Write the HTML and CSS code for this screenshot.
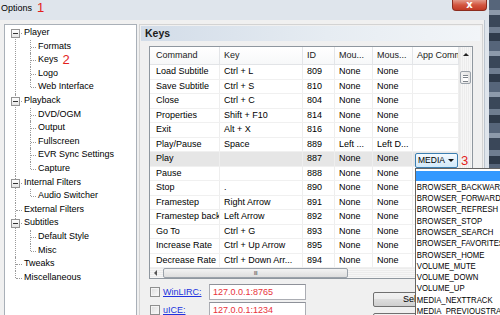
FILE: index.html
```html
<!DOCTYPE html>
<html lang="en">
<head>
<meta charset="UTF-8">
<title>Options</title>
<link rel="stylesheet" href="styles.css">
</head>
<body>
<div class="window">
  <div class="titlebar">
    <span class="title">Options</span>
    <span class="mark">1</span>
    <div class="close">x</div>
  </div>
  <div class="client">
    <ul class="tree">
      <li><div class="node"><span class="tog"></span>Player</div>
        <ul>
          <li><div class="node">Formats</div></li>
          <li><div class="node">Keys <span class="mark">2</span></div></li>
          <li><div class="node">Logo</div></li>
          <li><div class="node">Web Interface</div></li>
        </ul>
      </li>
      <li><div class="node"><span class="tog"></span>Playback</div>
        <ul>
          <li><div class="node">DVD/OGM</div></li>
          <li><div class="node">Output</div></li>
          <li><div class="node">Fullscreen</div></li>
          <li><div class="node">EVR Sync Settings</div></li>
          <li><div class="node">Capture</div></li>
        </ul>
      </li>
      <li><div class="node"><span class="tog"></span>Internal Filters</div>
        <ul>
          <li><div class="node">Audio Switcher</div></li>
        </ul>
      </li>
      <li><div class="node">External Filters</div></li>
      <li><div class="node"><span class="tog"></span>Subtitles</div>
        <ul>
          <li><div class="node">Default Style</div></li>
          <li><div class="node">Misc</div></li>
        </ul>
      </li>
      <li><div class="node">Tweaks</div></li>
      <li><div class="node">Miscellaneous</div></li>
    </ul>

    <div class="page">
      <div class="page-head">Keys</div>
      <div class="list">
        <div class="rows">
          <div class="row head">
            <div class="cell">Command</div><div class="cell">Key</div><div class="cell">ID</div><div class="cell">Mou...</div><div class="cell">Mous...</div><div class="cell">App Command</div>
          </div>
          <div class="row"><div class="cell">Load Subtitle</div><div class="cell">Ctrl + L</div><div class="cell">809</div><div class="cell">None</div><div class="cell">None</div><div class="cell"></div></div>
          <div class="row"><div class="cell">Save Subtitle</div><div class="cell">Ctrl + S</div><div class="cell">810</div><div class="cell">None</div><div class="cell">None</div><div class="cell"></div></div>
          <div class="row"><div class="cell">Close</div><div class="cell">Ctrl + C</div><div class="cell">804</div><div class="cell">None</div><div class="cell">None</div><div class="cell"></div></div>
          <div class="row"><div class="cell">Properties</div><div class="cell">Shift + F10</div><div class="cell">814</div><div class="cell">None</div><div class="cell">None</div><div class="cell"></div></div>
          <div class="row"><div class="cell">Exit</div><div class="cell">Alt + X</div><div class="cell">816</div><div class="cell">None</div><div class="cell">None</div><div class="cell"></div></div>
          <div class="row"><div class="cell">Play/Pause</div><div class="cell">Space</div><div class="cell">889</div><div class="cell">Left ...</div><div class="cell">Left D...</div><div class="cell"></div></div>
          <div class="row selected"><div class="cell">Play</div><div class="cell"></div><div class="cell">887</div><div class="cell">None</div><div class="cell">None</div>
            <div class="cell app">
              <div class="combo">MEDIA<span class="caret"></span>
                <span class="mark">3</span>
                <ul class="dropdown">
                  <li class="hl">&nbsp;</li>
                  <li>BROWSER_BACKWARD</li>
                  <li>BROWSER_FORWARD</li>
                  <li>BROWSER_REFRESH</li>
                  <li>BROWSER_STOP</li>
                  <li>BROWSER_SEARCH</li>
                  <li>BROWSER_FAVORITES</li>
                  <li>BROWSER_HOME</li>
                  <li>VOLUME_MUTE</li>
                  <li>VOLUME_DOWN</li>
                  <li>VOLUME_UP</li>
                  <li>MEDIA_NEXTTRACK</li>
                  <li>MEDIA_PREVIOUSTRACK</li>
                </ul>
              </div>
            </div>
          </div>
          <div class="row"><div class="cell">Pause</div><div class="cell"></div><div class="cell">888</div><div class="cell">None</div><div class="cell">None</div><div class="cell"></div></div>
          <div class="row"><div class="cell">Stop</div><div class="cell">.</div><div class="cell">890</div><div class="cell">None</div><div class="cell">None</div><div class="cell"></div></div>
          <div class="row"><div class="cell">Framestep</div><div class="cell">Right Arrow</div><div class="cell">891</div><div class="cell">None</div><div class="cell">None</div><div class="cell"></div></div>
          <div class="row"><div class="cell">Framestep back</div><div class="cell">Left Arrow</div><div class="cell">892</div><div class="cell">None</div><div class="cell">None</div><div class="cell"></div></div>
          <div class="row"><div class="cell">Go To</div><div class="cell">Ctrl + G</div><div class="cell">893</div><div class="cell">None</div><div class="cell">None</div><div class="cell"></div></div>
          <div class="row"><div class="cell">Increase Rate</div><div class="cell">Ctrl + Up Arrow</div><div class="cell">895</div><div class="cell">None</div><div class="cell">None</div><div class="cell"></div></div>
          <div class="row"><div class="cell">Decrease Rate</div><div class="cell">Ctrl + Down Arr...</div><div class="cell">894</div><div class="cell">None</div><div class="cell">None</div><div class="cell"></div></div>
        </div>
        <div class="vscroll">
          <div class="sbtn up"></div>
          <div class="vthumb"></div>
        </div>
        <div class="hscroll">
          <div class="sbtn left"></div>
          <div class="hthumb">III</div>
        </div>
        <div class="corner"></div>
      </div>

      <div class="below">
        <div class="remote">
          <div class="remote-row"><span class="check"></span><a class="link">WinLIRC:</a><div class="field">127.0.0.1:8765</div></div>
          <div class="remote-row"><span class="check"></span><a class="link">uICE:</a><div class="field">127.0.0.1:1234</div></div>
        </div>
        <div class="buttons">
          <div class="btn">Select All</div>
          <div class="btn">Reset Selected</div>
        </div>
      </div>
    </div>
  </div>
</div>
<div class="desktop"></div>
</body>
</html>
```

FILE: styles.css
```css
*{
    margin: 0;
    padding: 0;
    box-sizing: border-box;
}
html,body{
    height: 100%;
}
body{
    display: flex;
    overflow: hidden;
    font-family: "Liberation Sans", Arial, sans-serif;
    font-size: 9px;
    color: #000;
    background: #47566a;
}

/* window frame */
.window{
    width: 489px;
    height: 315px;
    flex-shrink: 0;
    display: flex;
    flex-direction: column;
    background: #dfe5ec;
}
.titlebar{
    height: 20px;
    display: flex;
    align-items: flex-start;
    padding-left: 1px;
}
.title{
    line-height: 16px;
}
.mark{
    color: #e3211c;
    font-size: 13px;
}
.titlebar .mark{
    margin-left: 5px;
    line-height: 16px;
}
.close{
    margin-left: auto;
    margin-right: 2px;
    width: 35px;
    height: 11px;
    border: 1px solid #8c2c1e;
    border-top: 0;
    border-radius: 0 0 4px 4px;
    background: linear-gradient(#e39a8a, #d3553f 50%, #c13a25);
    color: #fff;
    font-family: "DejaVu Sans", sans-serif;
    font-weight: bold;
    font-size: 10px;
    line-height: 9px;
    text-align: center;
}
.client{
    flex: 1;
    min-height: 0;
    display: flex;
    gap: 2px;
    padding: 4px 1px 0 4px;
    margin-right: 4px;
    background: #f0f0f0;
    border-right: 1px solid #bcc5cf;
}
.desktop{
    flex: 1;
    background: repeating-linear-gradient(180deg,
        #56657a 0 10px, #8d9aab 10px 15px, #3a4759 15px 27px,
        #6f7d90 27px 33px, #2f3b4b 33px 41px);
}

/* tree */
.tree{
    list-style: none;
    width: 133px;
    flex-shrink: 0;
    padding-top: 1px;
    background: #fff;
    border: 1px solid #a9b0b8;
    border-bottom: 0;
}
.tree ul{
    list-style: none;
    margin-left: 19px;
}
.tree li{
    position: relative;
}
.node{
    position: relative;
    height: 13.6px;
    line-height: 13.6px;
    white-space: nowrap;
}
.tree > li > .node{
    padding-left: 19px;
}
.tree ul .node{
    padding-left: 14px;
}
/* vertical dotted lines */
.tree > li::before{
    content: "";
    position: absolute;
    left: 10px;
    top: 0;
    bottom: 0;
    border-left: 1px dotted #9a9a9a;
}
.tree > li:first-child::before{
    top: 7px;
}
.tree > li:last-child::before{
    bottom: auto;
    height: 7px;
}
.tree ul li::before{
    content: "";
    position: absolute;
    left: 6px;
    top: 0;
    bottom: 0;
    border-left: 1px dotted #9a9a9a;
}
.tree ul li:last-child::before{
    bottom: auto;
    height: 7px;
}
/* horizontal stubs */
.tree > li > .node::before{
    content: "";
    position: absolute;
    left: 11px;
    top: 7px;
    width: 6px;
    border-top: 1px dotted #9a9a9a;
}
.tree ul .node::before{
    content: "";
    position: absolute;
    left: 7px;
    top: 7px;
    width: 5px;
    border-top: 1px dotted #9a9a9a;
}
.tog{
    position: absolute;
    left: 6px;
    top: 3px;
    width: 9px;
    height: 9px;
    border: 1px solid #939393;
    background: linear-gradient(#fff, #e4e4e4);
    z-index: 1;
}
.tog::after{
    content: "";
    position: absolute;
    left: 1px;
    top: 3px;
    width: 5px;
    border-top: 1px solid #333;
}
.node .mark{
    margin-left: 2px;
    line-height: 13.6px;
    vertical-align: top;
}

/* property page */
.page{
    flex: 1;
    padding: 1px 2px 0 1px;
    border: 1px solid #d3d3d3;
    border-bottom: 0;
}
.page-head{
    height: 15px;
    line-height: 15px;
    padding-left: 4px;
    font-size: 10.5px;
    font-weight: bold;
    color: #1b1b1b;
    background: linear-gradient(90deg, #d2dce8, #e6ecf2 55%, #f2f5f8);
}

/* list view */
.list{
    width: 324px;
    margin: 5px 0 0 8px;
    display: grid;
    grid-template-columns: 309px 13px;
    grid-template-rows: 221px 10px;
    border: 1px solid #8f979f;
    background: #fff;
}
.row{
    display: grid;
    grid-template-columns: 70px 83px 32px 38px 40px 46px;
    height: 14.5px;
    border-bottom: 1px solid #f0f0f0;
}
.row.head{
    height: 18px;
    border-bottom: 1px solid #e2e4e7;
    background: linear-gradient(#fff, #f7f8f9);
    color: #222;
}
.row.selected{
    background: #e6e6e6;
}
.cell{
    padding-left: 4px;
    border-right: 1px solid #eeeeee;
    line-height: 13.5px;
    white-space: nowrap;
    overflow: hidden;
}
.cell:first-child{
    padding-left: 6px;
}
.head .cell{
    line-height: 17px;
    border-right: 1px solid #e3e5e8;
}
.cell.app{
    overflow: visible;
    padding-left: 2px;
}

.combo{
    position: relative;
    width: 43px;
    height: 15px;
    margin-top: 0.5px;
    padding-left: 2px;
    border: 1px solid #3c7fb1;
    border-radius: 2px;
    background: linear-gradient(#f4faff, #e2f1fc 50%, #d2e9f9);
    font-size: 8.5px;
    line-height: 13px;
}
.caret{
    position: absolute;
    right: 3px;
    top: 5px;
    border-left: 3px solid transparent;
    border-right: 3px solid transparent;
    border-top: 3px solid #111;
}
.combo .mark{
    position: absolute;
    left: calc(100% + 4px);
    top: -1px;
    line-height: 15px;
    font-size: 13px;
}
.dropdown{
    position: absolute;
    left: -1px;
    top: calc(100% + 1px);
    width: 110px;
    padding-top: 2px;
    list-style: none;
    border: 1px solid #646464;
    background: #fff;
    font-size: 9px;
    z-index: 5;
}
.dropdown li{
    height: 11.3px;
    line-height: 11.3px;
    padding-left: 1px;
    white-space: nowrap;
    transform: scaleX(0.86);
    transform-origin: left center;
}
.dropdown li.hl{
    height: 10.3px;
    margin-bottom: 1px;
    background: #3399ff;
}

/* scrollbars */
.vscroll, .corner{
    background: repeating-linear-gradient(90deg, #ececec 0 1px, #f6f6f6 1px 2px);
}
.vscroll{
    border-left: 1px solid #e9e9e9;
}
.sbtn.up{
    height: 17px;
    position: relative;
}
.sbtn.up::after{
    content: "";
    position: absolute;
    left: 3px;
    top: 6px;
    border-left: 3px solid transparent;
    border-right: 3px solid transparent;
    border-bottom: 3px solid #222;
}
.vthumb{
    position: relative;
    margin: 7px 1px 0 0;
    height: 13px;
    border: 1px solid #9ba2aa;
    border-radius: 2px;
    background: linear-gradient(90deg, #f3f3f3, #e2e2e2);
}
.vthumb::after{
    content: "";
    position: absolute;
    left: 2px;
    right: 2px;
    top: 3px;
    height: 5px;
    border-top: 1px solid #7d838a;
    border-bottom: 1px solid #7d838a;
    background: linear-gradient(#fff 0 1px, #7d838a 1px 2px, #fff 2px);
}
.hscroll{
    display: flex;
    align-items: center;
    background: repeating-linear-gradient(180deg, #ececec 0 1px, #f6f6f6 1px 2px);
}
.sbtn.left{
    position: relative;
    width: 13px;
    height: 10px;
}
.sbtn.left::after{
    content: "";
    position: absolute;
    left: 4px;
    top: 2px;
    border-top: 3px solid transparent;
    border-bottom: 3px solid transparent;
    border-right: 3px solid #555;
}
.hthumb{
    width: 185px;
    height: 10px;
    border: 1px solid #9ba2aa;
    border-radius: 2px;
    background: linear-gradient(#f3f3f3, #dedede);
    color: #555;
    font-size: 6px;
    line-height: 8px;
    text-align: center;
    letter-spacing: -0.5px;
}

/* remote controls */
.below{
    display: flex;
    margin: 5px 0 0 9px;
}
.remote{
    display: flex;
    flex-direction: column;
    gap: 2px;
}
.remote-row{
    height: 16px;
    display: flex;
    align-items: center;
}
.check{
    width: 10px;
    height: 10px;
    margin-right: 3px;
    border: 1px solid #8e8f8f;
    background: linear-gradient(135deg, #dcdcdc, #fbfbfb);
    box-shadow: inset 0 0 0 1px #f4f4f4;
}
.link{
    width: 46px;
    color: #2233dd;
    text-decoration: underline;
}
.field{
    width: 97px;
    height: 16px;
    padding-left: 3px;
    border: 1px solid #abadb3;
    border-top-color: #8e9199;
    background: #fff;
    color: #e8323b;
    line-height: 14px;
}
.buttons{
    display: flex;
    flex-direction: column;
    gap: 6px;
    margin: 8px 0 0 67px;
}
.btn{
    width: 97px;
    height: 15px;
    border: 1px solid #707070;
    border-radius: 2px;
    background: linear-gradient(#f2f2f2, #ebebeb 50%, #dddddd 50%, #cfcfcf);
    text-align: center;
    line-height: 13px;
}
```
